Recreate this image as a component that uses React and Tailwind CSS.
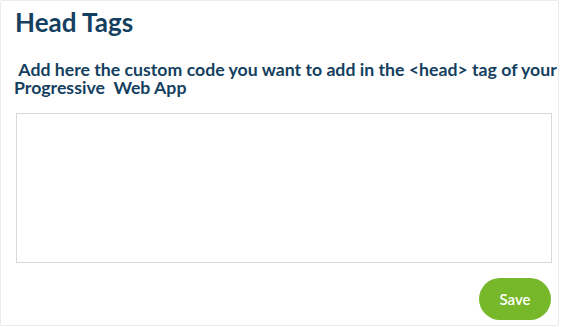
export default function App() {
  return (
    <div className="w-[561px] h-[327px] bg-white" style={{ fontFamily: "Lato, 'Open Sans', sans-serif" }}>
      <div className="w-[559px] h-[326px] border border-[#ebebeb] rounded-[2px] flex flex-col pl-[13px] pr-[7px]">
        <h1 className="text-[26px] font-bold text-[#143f5f] leading-none mt-[8px] pl-[1px]">Head Tags</h1>
        <p className="text-[17.7px] font-bold text-[#143f5f] leading-[18px] mt-[26px] whitespace-pre-wrap w-[560px]">
          {" Add here the custom code you want to add in the <head> tag of your Progressive  Web App"}
        </p>
        <textarea className="mt-[16px] ml-[2px] w-[536px] h-[150px] border border-[#dadada] resize-none outline-none" />
        <div className="flex justify-end mt-[15px]">
          <button className="w-[72px] h-[42px] rounded-full bg-[#77b82a] text-white text-[15px] font-semibold">Save</button>
        </div>
      </div>
    </div>
  );
}
